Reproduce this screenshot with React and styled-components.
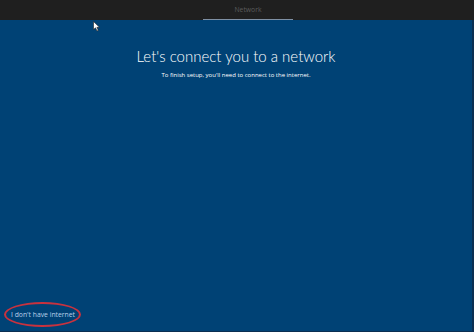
import React from 'react';
import styled, { createGlobalStyle } from 'styled-components';

const GlobalStyle = createGlobalStyle`
  html, body {
    margin: 0;
    padding: 0;
    background: #003f72;
  }
  body {
    font-family: "Open Sans", "Noto Sans", sans-serif;
  }
`;

const Screen = styled.div`
  position: relative;
  width: 474px;
  height: 332px;
  display: flex;
  flex-direction: column;
  overflow: hidden;
`;

const TopBar = styled.div`
  height: 20px;
  background: #1f1f1f;
  display: flex;
  justify-content: center;
  flex-shrink: 0;
`;

const Tab = styled.div`
  width: 90px;
  margin-left: 22px;
  display: flex;
  align-items: center;
  justify-content: center;
  font-size: 6.8px;
  color: #5c5c5c;
  border-bottom: 1px solid #7f90a4;
  box-sizing: border-box;
`;

const Main = styled.div`
  flex: 1;
  display: flex;
  flex-direction: column;
  background: #004275;
  border-right: 2px solid #0b2f52;
  border-bottom: 1px solid #0b2f52;
`;

const Header = styled.div`
  display: flex;
  flex-direction: column;
  align-items: center;
  padding-top: 26px;
`;

const Title = styled.h1`
  margin: 0;
  font-family: "Lato", "Open Sans", sans-serif;
  font-weight: 300;
  font-size: 15px;
  line-height: 21px;
  color: #ffffff;
`;

const Subtitle = styled.p`
  margin: 4px 0 0;
  font-size: 6px;
  color: #ffffff;
`;

const Footer = styled.div`
  margin-top: auto;
  padding: 0 0 4px 4px;
  display: flex;
`;

const Circled = styled.div`
  width: 77px;
  height: 25px;
  display: flex;
  align-items: center;
  justify-content: center;
  border: 2px solid #c8323e;
  border-radius: 50%;
  box-sizing: border-box;
`;

const LinkText = styled.span`
  font-size: 6.8px;
  color: #b9d0ea;
  margin-left: 1px;
`;

const Cursor = styled.svg`
  position: absolute;
  left: 93px;
  top: 21px;
`;

export default function App() {
  return (
    <>
      <GlobalStyle />
      <Screen>
        <TopBar>
          <Tab>Network</Tab>
        </TopBar>
        <Main>
          <Header>
            <Title>Let's connect you to a network</Title>
            <Subtitle>To finish setup, you'll need to connect to the internet.</Subtitle>
          </Header>
          <Footer>
            <Circled>
              <LinkText>I don't have internet</LinkText>
            </Circled>
          </Footer>
        </Main>
        <Cursor width="8" height="11" viewBox="0 0 8 11">
          <path d="M0.5 0.5 L0.5 8.5 L2.5 6.8 L4 10 L5.3 9.4 L3.9 6.3 L6.5 6.3 Z" fill="#ffffff" stroke="#222" strokeWidth="0.6" />
        </Cursor>
      </Screen>
    </>
  );
}
